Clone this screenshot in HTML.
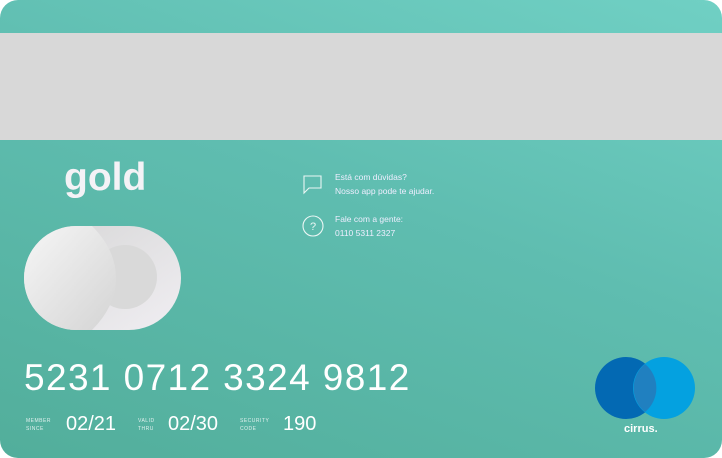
<!DOCTYPE html>
<html><head><meta charset="utf-8"><style>
html,body{margin:0;padding:0;width:722px;height:458px;background:#fff;overflow:hidden}
.card{position:absolute;left:0;top:0;width:722px;height:458px;border-radius:18px;background:linear-gradient(200deg,#70d0c4 0%,#5fbdb0 45%,#52ae9b 100%);overflow:hidden;font-family:"Liberation Sans",sans-serif;color:#fff}
.stripe{position:absolute;left:0;top:33px;width:722px;height:107px;background:#d8d8d8}
.gold{position:absolute;left:64px;top:156px;font-size:39px;font-weight:bold;color:#f4f2f6;letter-spacing:0px}
.t{position:absolute;font-size:8.5px;color:#eef;line-height:14px}
.num{position:absolute;left:24px;top:357px;font-size:37px;letter-spacing:1.4px;font-weight:300}
.lab{position:absolute;font-size:5px;line-height:8px;letter-spacing:.5px;color:#e0f0ee}
.val{position:absolute;top:413px;font-size:20px}
</style></head><body>
<div class="card">
<div class="stripe"></div>
<div class="gold">gold</div>
<svg style="position:absolute;left:0;top:0" width="722" height="458">
<defs><linearGradient id="g1" x1="0" y1="0" x2="1" y2="1"><stop offset="0" stop-color="#d6d6d6"/><stop offset="1" stop-color="#f0eef2"/></linearGradient>
<linearGradient id="g2" x1="0" y1="0" x2="1" y2="1"><stop offset="0" stop-color="#f6f6f6"/><stop offset="1" stop-color="#d4d4d4"/></linearGradient></defs>
<rect x="24" y="226" width="157" height="104" rx="52" fill="url(#g1)"/>
<circle cx="125" cy="277" r="32" fill="#d9d9d9"/>
<path d="M76 226 L92 226 Q116 250 116 278 Q116 306 92 330 L76 330 A52 52 0 0 1 76 226Z" fill="url(#g2)"/>
<path d="M304 176 h17 v12 h-12 l-5 5 z" fill="none" stroke="#eaf6f4" stroke-width="1.1"/>
<circle cx="313" cy="226" r="10" fill="none" stroke="#eaf6f4" stroke-width="1.1"/>
<text x="313" y="230" font-size="11" text-anchor="middle" fill="#eaf6f4" font-family="Liberation Sans">?</text>
<ellipse cx="626" cy="388" rx="31" ry="31" fill="#0369b3"/>
<ellipse cx="664" cy="388" rx="31" ry="31" fill="#04a1e0"/>
<path d="M645 364 A31 31 0 0 1 645 412 A31 31 0 0 1 645 364Z" fill="#2080c0"/>
</svg>
<div class="t" style="left:335px;top:170px">Está com dúvidas?<br>Nosso app pode te ajudar.</div>
<div class="t" style="left:335px;top:212px">Fale com a gente:<br>0110 5311 2327</div>
<div class="num">5231 0712 3324 9812</div>
<div class="lab" style="left:26px;top:417px">MEMBER<br>SINCE</div>
<div class="val" style="left:66px">02/21</div>
<div class="lab" style="left:138px;top:417px">VALID<br>THRU</div>
<div class="val" style="left:168px">02/30</div>
<div class="lab" style="left:240px;top:417px">SECURITY<br>CODE</div>
<div class="val" style="left:283px">190</div>
<div style="position:absolute;left:624px;top:423px;font-size:11px;font-weight:bold">cirrus.</div>
</div>
</body></html>
